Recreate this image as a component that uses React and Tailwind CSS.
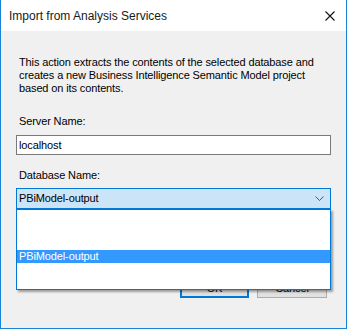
import React from 'react';

const sans = { fontFamily: '"Liberation Sans", Arial, sans-serif' };

const App = () => {
  return (
    <div className="w-[347px] h-[329px] flex flex-col bg-[#f0f0f0] border-l border-r border-b border-[#1883d7] text-black">
      {/* title bar */}
      <div className="h-[31px] bg-white flex items-center justify-between pl-[8px] pr-[10px]">
        <span className="text-[12px] text-[#1a1a1a]" style={sans}>Import from Analysis Services</span>
        <svg width="10" height="10" viewBox="0 0 10 10" className="mr-[1px]">
          <path d="M0.5 0.5 L9.5 9.5 M9.5 0.5 L0.5 9.5" stroke="#111" strokeWidth="1.1" />
        </svg>
      </div>

      {/* body */}
      <div className="relative flex-1 flex flex-col pt-[25px] pl-[15px] text-[11px] leading-[13px] tracking-[-0.12px]" style={sans}>
        <p className="pl-[3px] w-[310px]">
          This action extracts the contents of the selected database and creates a new Business Intelligence Semantic Model project based on its contents.
        </p>

        <label className="pl-[3px] mt-[20px]">Server Name:</label>
        <div className="mt-[7px] w-[315px] h-[20px] bg-white border border-[#7a7a7a] flex items-center pl-[2px]">
          localhost
        </div>

        <label className="pl-[3px] mt-[14px]">Database Name:</label>
        <div className="mt-[6px] w-[315px] h-[21px] bg-[#cce4f7] border border-[#0078d7] flex items-center justify-between pl-[2px] pr-[6px]">
          <span>PBiModel-output</span>
          <svg width="9" height="5" viewBox="0 0 9 5">
            <path d="M0.5 0.5 L4.5 4.5 L8.5 0.5" fill="none" stroke="#555" strokeWidth="1" />
          </svg>
        </div>

        {/* buttons */}
        <div className="mt-[66px] flex gap-[8px] pl-[164px]">
          <button className="w-[69px] h-[23px] border-2 border-[#0078d7] bg-[#e1e1e1] text-[11px] pt-[3px]">OK</button>
          <button className="w-[70px] h-[23px] border border-[#adadad] bg-[#e1e1e1] text-[11px] pt-[3px]">Cancel</button>
        </div>

        {/* open dropdown list */}
        <div className="absolute left-[15px] top-[178px] w-[315px] h-[81px] bg-white border border-[#0078d7] shadow-[2px_2px_2px_rgba(0,0,0,0.35)]">
          <div className="mt-[40px] h-[13px] bg-[#3399ff] text-white pl-[2px] leading-[13px]">PBiModel-output</div>
        </div>
      </div>
    </div>
  );
};

export default App;
